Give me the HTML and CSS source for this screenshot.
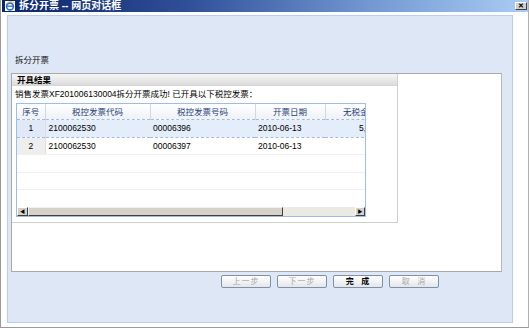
FILE: index.html
```html
<!DOCTYPE html>
<html lang="zh-CN">
<head>
    <meta charset="UTF-8">
    <title>拆分开票 -- 网页对话框</title>
    <link rel="stylesheet" href="styles.css">
</head>
<body>
    <div class="window">
        <div class="titlebar">
            <svg class="ie-icon" width="10" height="10" viewBox="0 0 10 10">
                <rect x="0" y="0" width="10" height="10" fill="#ffffff"/>
                <circle cx="5" cy="5.5" r="3.4" fill="none" stroke="#2a6fd6" stroke-width="1.6"/>
                <line x1="1.8" y1="5.2" x2="8.2" y2="5.2" stroke="#2a6fd6" stroke-width="1.3"/>
                <path d="M1 3 Q5 -1 9.5 2" fill="none" stroke="#e8b020" stroke-width="1"/>
            </svg>
            <span class="title-text">拆分开票 -- 网页对话框</span>
            <span class="close-btn">✕</span>
        </div>
        <div class="client">
            <div class="content">
                <div class="page-title">拆分开票</div>
                <div class="panel">
                    <div class="result-box">
                        <div class="legend-bar">开具结果</div>
                        <div class="message">销售发票XF201006130004拆分开票成功! 已开具以下税控发票：</div>
                        <div class="grid">
                            <div class="grid-body">
                                <table>
                                    <colgroup>
                                        <col class="c-no">
                                        <col class="c-code">
                                        <col class="c-num">
                                        <col class="c-date">
                                        <col class="c-amt">
                                    </colgroup>
                                    <thead>
                                        <tr>
                                            <th>序号</th>
                                            <th>税控发票代码</th>
                                            <th>税控发票号码</th>
                                            <th>开票日期</th>
                                            <th>无税金额</th>
                                        </tr>
                                    </thead>
                                    <tbody>
                                        <tr class="selected">
                                            <td class="no">1</td>
                                            <td>2100062530</td>
                                            <td>00006396</td>
                                            <td>2010-06-13</td>
                                            <td class="amt">5,000.00</td>
                                        </tr>
                                        <tr class="tall-2">
                                            <td class="no">2</td>
                                            <td>2100062530</td>
                                            <td>00006397</td>
                                            <td>2010-06-13</td>
                                            <td class="amt"></td>
                                        </tr>
                                        <tr class="empty"><td colspan="5"></td></tr>
                                        <tr class="empty tall-2"><td colspan="5"></td></tr>
                                        <tr class="empty last"><td colspan="5"></td></tr>
                                    </tbody>
                                </table>
                            </div>
                            <div class="hscroll">
                                <span class="sb-btn">&#9664;</span>
                                <span class="sb-thumb"></span>
                                <span class="sb-track"></span>
                                <span class="sb-btn">&#9654;</span>
                            </div>
                        </div>
                    </div>
                </div>
                <div class="buttons">
                    <button class="btn" disabled>上一步</button>
                    <button class="btn" disabled>下一步</button>
                    <button class="btn primary">完&nbsp;&nbsp;成</button>
                    <button class="btn" disabled>取&nbsp;&nbsp;消</button>
                </div>
            </div>
        </div>
    </div>
</body>
</html>
```

FILE: styles.css
```css
* {
    box-sizing: border-box;
}
body {
    margin: 0;
    width: 529px;
    height: 328px;
    overflow: hidden;
    background: #ffffff;
    font-family: "Liberation Sans", "Noto Sans CJK SC", sans-serif;
    font-size: 8.5px;
    color: #000;
}
.window {
    height: 328px;
    border-left: 1px solid #9a9a9a;
    border-right: 1px solid #b0b0b0;
    border-bottom: 1px solid #9a9a9a;
    background: #ffffff;
}

/* title bar */
.titlebar {
    height: 12px;
    margin-left: 1px;
    display: flex;
    align-items: center;
    background: linear-gradient(to right, #0a2468 0%, #2f4f98 35%, #7398d2 70%, #a9cdf3 100%);
    color: #fff;
}
.ie-icon {
    margin-left: 3px;
    margin-right: 4px;
}
.title-text {
    font-weight: bold;
    font-size: 10px;
    line-height: 12px;
    flex: 1;
}
.close-btn {
    width: 12px;
    height: 8px;
    margin-right: 1px;
    background: #d4d0c8;
    border: 1px solid;
    border-color: #fff #404040 #404040 #fff;
    color: #000;
    font-size: 7px;
    line-height: 6px;
    text-align: center;
    font-weight: bold;
}

/* client area */
.client {
    padding: 3px 15px 4px 6px;
}
.content {
    height: 308px;
    background: #dee7f5;
    border: 1px solid #b9cdf1;
}
.page-title {
    padding-top: 38px;
    padding-left: 7px;
    line-height: 12px;
    height: 50px;
    margin-bottom: 7px;
    color: #111;
}
.panel {
    margin-left: 3px;
    width: 491px;
    height: 199px;
    background: #fff;
    border: 1px solid #a9a9a9;
    border-right-color: #b8b8b8;
}
.result-box {
    width: 386px;
    height: 149px;
    border-right: 1px solid #cfcfcf;
    border-bottom: 1px solid #cfcfcf;
}
.legend-bar {
    height: 12px;
    line-height: 12px;
    padding-left: 5px;
    font-weight: bold;
    background: linear-gradient(#f6f6f6, #dcdcdc);
    border-bottom: 1px solid #d6d6d6;
}
.message {
    margin-top: 2px;
    padding-left: 3px;
    height: 12px;
    line-height: 12px;
}

/* grid */
.grid {
    margin-top: 3px;
    margin-left: 4px;
    width: 350px;
    height: 114px;
    border: 1px solid #9ebce9;
    overflow: hidden;
}
.grid-body {
    height: 103px;
    overflow: hidden;
}
.grid table {
    border-collapse: collapse;
    table-layout: fixed;
    width: 378px;
}
.c-no { width: 28px; }
.c-code { width: 105px; }
.c-num { width: 105px; }
.c-date { width: 70px; }
.c-amt { width: 70px; }
.grid th {
    height: 15px;
    padding: 0;
    font-weight: normal;
    color: #1d3f78;
    background: linear-gradient(#ffffff, #eef1f6);
    border-right: 1px solid #d4d8de;
    border-bottom: 1px dashed #a3bae9;
    text-align: center;
    white-space: nowrap;
    overflow: hidden;
}
.grid td {
    height: 18px;
    padding: 0 3px;
    white-space: nowrap;
    overflow: hidden;
    border-bottom: 1px solid #f0f0f0;
}
.grid tr.tall-2 td {
    height: 17px;
}
.grid td.no {
    text-align: center;
    background: #eeeeee;
    border-right: 1px solid #dedede;
}
.grid td.amt {
    text-align: right;
}
.grid tr.selected td {
    background: #e4edfa;
    border-bottom: 1px dashed #a3bae9;
}
.grid tr.selected td.no {
    background: #e0e9f7;
}
.grid tr.last td {
    border-bottom: none;
}
.hscroll {
    display: flex;
    height: 9px;
}
.sb-btn {
    width: 11px;
    background: #d4d0c8;
    border: 1px solid;
    border-color: #fff #404040 #404040 #fff;
    font-size: 5px;
    line-height: 7px;
    text-align: center;
    color: #000;
}
.sb-btn:last-child {
    width: 10px;
}
.sb-thumb {
    width: 255px;
    background: #d6d2ca;
    border: 1px solid;
    border-color: #f0f0f0 #404040 #404040 #f0f0f0;
}
.sb-track {
    flex: 1;
    background: #ebe9e4;
}

/* buttons */
.buttons {
    display: flex;
    gap: 6px;
    margin-top: 3px;
    padding-left: 213px;
}
.btn {
    width: 50px;
    height: 13px;
    padding: 0;
    font-family: inherit;
    font-size: 8px;
    line-height: 11px;
    letter-spacing: 1px;
    border: 1px solid #7f90aa;
    border-radius: 2px;
    background: linear-gradient(#ffffff, #e4e6ea);
    color: #a8a8a8;
}
.btn.primary {
    color: #000;
    font-weight: bold;
}
```
